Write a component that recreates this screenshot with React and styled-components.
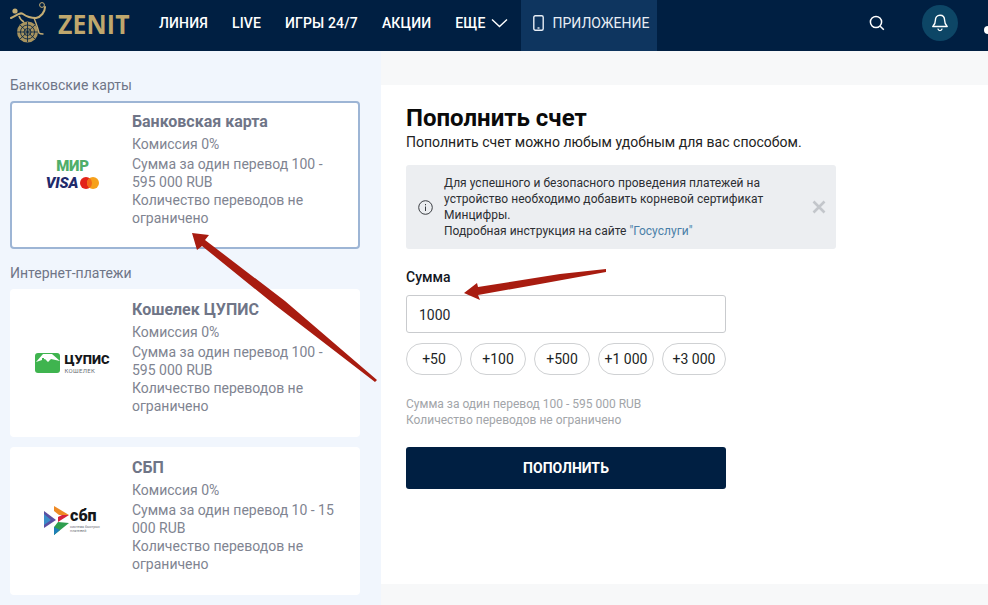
import React from "react";
import styled, { createGlobalStyle } from "styled-components";

const Global = createGlobalStyle`
  html, body { margin: 0; padding: 0; background: #f7f8f9; }
  body { font-family: Roboto, "Liberation Sans", sans-serif; overflow: hidden; }
  * { box-sizing: border-box; }
`;

const Page = styled.div`
  position: relative;
  width: 988px;
  height: 605px;
  overflow: hidden;
  display: flex;
  flex-direction: column;
`;
const Header = styled.header`
  height: 51px;
  flex: none;
  background: #001f42;
  display: flex;
  align-items: stretch;
  padding-left: 10px;
  position: relative;
`;
const Brand = styled.div`
  width: 149px;
  flex: none;
  display: flex;
  align-items: center;
  gap: 8px;
  padding-bottom: 5px;
`;
const BrandName = styled.span`
  font-family: "Open Sans", "Liberation Sans", sans-serif;
  font-size: 27.5px;
  font-weight: 700;
  letter-spacing: 0.2px;
  color: #bfa76d;
  transform: scaleX(0.9);
  transform-origin: left center;
`;
const Nav = styled.nav`
  display: flex;
  align-items: stretch;
  gap: 24px;
`;
const NavItem = styled.div`
  display: flex;
  align-items: center;
  gap: 6px;
  padding-bottom: 5px;
  color: #fff;
  font-size: 14px;
  font-weight: 500;
  letter-spacing: 0.15px;
  white-space: nowrap;
`;
const AppTile = styled.div`
  margin-left: -11px;
  width: 136px;
  padding: 0 0 5px 12px;
  background: #0e355f;
  color: #e8eef5;
  display: flex;
  align-items: center;
  gap: 8px;
  font-size: 14px;
  font-weight: 400;
`;
const HeaderTools = styled.div`
  margin-left: 212px;
  padding-bottom: 5px;
  display: flex;
  align-items: center;
  gap: 37px;
`;
const BellCircle = styled.div`
  width: 36px;
  height: 36px;
  border-radius: 50%;
  background: #0d4666;
  display: flex;
  align-items: center;
  justify-content: center;
`;
const UserDot = styled.div`
  position: absolute;
  right: -4px;
  top: 26px;
  width: 8px;
  height: 8px;
  border-radius: 50%;
  background: #fff;
`;
const Body = styled.div`
  flex: 1;
  display: flex;
  min-height: 0;
`;
const Sidebar = styled.aside`
  width: 381px;
  flex: none;
  background: #f1f6fd;
  padding: 26px 20px 0 10px;
`;
const GroupLabel = styled.div`
  font-size: 14px;
  line-height: 16px;
  color: #6f7587;
  margin-bottom: 8px;
  margin-top: ${(p) => p.$mt || 0}px;
`;
const Card = styled.div`
  width: 350px;
  height: 148px;
  background: #fff;
  border-radius: 4px;
  border: 2px solid ${(p) => (p.$active ? "#9db5d5" : "transparent")};
  display: flex;
  align-items: flex-start;
  margin-bottom: 10px;
`;
const LogoSlot = styled.div`
  width: 120px;
  height: 100%;
  flex: none;
  display: flex;
  align-items: center;
  justify-content: center;
`;
const CardText = styled.div`
  width: 212px;
  padding-top: 9px;
`;
const CardTitle = styled.div`
  font-size: 16px;
  line-height: 20px;
  font-weight: 700;
  color: #6f7587;
  margin-bottom: 3px;
`;
const CardLine = styled.div`
  font-size: 14px;
  line-height: 18px;
  color: #808491;
  margin-top: ${(p) => p.$mt || 0}px;
`;
const Main = styled.main`
  flex: 1;
  padding-top: 34px;
  background: #f7f8f9;
`;
const Panel = styled.section`
  background: #fff;
  height: 499px;
  padding: 19px 25px 0;
`;
const Title = styled.h1`
  margin: 0;
  font-size: 24px;
  line-height: 28px;
  font-weight: 700;
  color: #0a0a0a;
`;
const Subtitle = styled.p`
  margin: 1px 0 0;
  font-size: 14px;
  line-height: 18px;
  letter-spacing: 0.02px;
  color: #222;
`;
const Notice = styled.div`
  margin-top: 14px;
  width: 430px;
  height: 84px;
  background: #eceef1;
  border-radius: 3px;
  display: flex;
  align-items: center;
  padding-left: 12px;
`;
const NoticeText = styled.div`
  margin-left: 11px;
  width: 362px;
  font-size: 12px;
  line-height: 16px;
  letter-spacing: 0.03px;
  color: #2c2f33;
`;
const NoticeLink = styled.span`
  color: #4a7fa8;
`;
const CloseBtn = styled.div`
  margin-left: 6px;
  display: flex;
`;
const FieldLabel = styled.div`
  margin-top: 20px;
  font-size: 14px;
  line-height: 16px;
  font-weight: 500;
  color: #14181f;
`;
const AmountBox = styled.div`
  margin-top: 10px;
  width: 320px;
  height: 38px;
  border: 1px solid #c9cbce;
  border-radius: 3px;
  display: flex;
  align-items: center;
  padding: 1px 0 0 12px;
  font-size: 14px;
  color: #24282e;
`;
const Chips = styled.div`
  margin-top: 10px;
  width: 320px;
  display: flex;
  gap: 8px;
`;
const Chip = styled.div`
  width: ${(p) => p.$w || 56}px;
  height: 32px;
  border: 1px solid #cfd1d3;
  border-radius: 16px;
  display: flex;
  align-items: center;
  justify-content: center;
  font-size: 14px;
  color: #1c1f24;
  white-space: nowrap;
`;
const Hint = styled.div`
  margin-top: 21px;
  font-size: 12px;
  line-height: 16px;
  color: #a2a5a9;
`;
const Submit = styled.div`
  margin-top: 19px;
  width: 320px;
  height: 42px;
  background: #001f42;
  border-radius: 3px;
  color: #fff;
  font-size: 14px;
  font-weight: 700;
  display: flex;
  align-items: center;
  justify-content: center;
`;
const ArrowLayer = styled.svg`
  position: absolute;
  left: 0;
  top: 0;
  pointer-events: none;
`;

const MirVisaRow = styled.div`
  display: flex;
  flex-direction: column;
  align-items: center;
  margin-left: 1px;
`;
const Mir = styled.span`
  font-size: 15px;
  line-height: 13px;
  font-weight: 900;
  color: #4fae6a;
  letter-spacing: -0.2px;
`;
const VisaRow = styled.div`
  display: flex;
  align-items: center;
  gap: 2px;
  margin-top: 3px;
`;
const Visa = styled.span`
  font-size: 15px;
  line-height: 15px;
  font-weight: 900;
  font-style: italic;
  color: #1f2a6b;
  letter-spacing: -0.1px;
`;
const LogoRow = styled.div`
  display: flex;
  align-items: center;
  gap: ${(p) => p.$gap || 0}px;
`;
const LogoWords = styled.div`
  display: flex;
  flex-direction: column;
  gap: ${(p) => p.$gap || 0}px;
`;
const LogoBig = styled.span`
  font-size: ${(p) => p.$size || 13}px;
  line-height: ${(p) => p.$line || 13}px;
  font-weight: 900;
  color: #15171a;
`;
const LogoSmall = styled.span`
  font-size: ${(p) => p.$size || 6}px;
  line-height: ${(p) => p.$line || 7}px;
  letter-spacing: ${(p) => p.$track || 0}px;
  color: #6b7078;
  white-space: pre-line;
`;

const ZenitMark = () => (
  <svg width="40" height="44" viewBox="0 0 40 44" fill="none">
    <circle cx="17.5" cy="31" r="10.5" fill="#a8945f" />
    <g stroke="#001f42" strokeWidth="0.8">
      <circle cx="17.5" cy="31" r="7" />
      <circle cx="17.5" cy="31" r="3.5" />
      <path d="M7 31h21M17.5 21v20M10 24l15 14M25 24 10 38" />
    </g>
    <circle cx="5" cy="10" r="2.6" fill="#c4ad74" />
    <path d="M1 17c6-3 9-6 12-4 4 3 9 4 13 4 5-1 9-6 9-11" stroke="#c4ad74" strokeWidth="2" strokeLinecap="round" />
    <path d="M24 17c2 5 4 10 5 15 1 1 3 1 4 1" stroke="#c4ad74" strokeWidth="1.4" strokeLinecap="round" />
    <circle cx="32" cy="4" r="2.4" stroke="#c4ad74" strokeWidth="1" />
    <path d="M9 15c1 3 3 5 5 6" stroke="#c4ad74" strokeWidth="1.6" />
  </svg>
);

const MastercardMark = () => (
  <svg width="19" height="12" viewBox="0 0 19 12">
    <circle cx="6" cy="6" r="6" fill="#e2231a" />
    <circle cx="13" cy="6" r="6" fill="#f6a11b" />
    <path d="M9.5 1.1a6 6 0 0 1 0 9.8 6 6 0 0 1 0-9.8z" fill="#f26a1b" />
  </svg>
);

const WalletMark = () => (
  <svg width="30" height="20" viewBox="0 0 30 20">
    <path d="M3 0h19a3 3 0 0 1 3 3v14a3 3 0 0 1-3 3H3a3 3 0 0 1-3-3V3a3 3 0 0 1 3-3z" fill="#3fb44f" />
    <path d="M1 9 8 1h9l8 7-9-2-3 3-3-3z" fill="#fff" />
    <path d="M7 5h2v2H7z" fill="#3fb44f" />
  </svg>
);

const SbpMark = () => (
  <svg width="26" height="30" viewBox="0 0 26 30">
    <path d="M10 0 25 9H15l-5-4z" fill="#ee8a25" />
    <path d="M25 9 14 16v-5l4-2z" fill="#d5213e" />
    <path d="M0 5 12 14 0 22z" fill="#5b4fa2" />
    <path d="M0 8 7 14 0 19z" fill="#3c8ec9" />
    <path d="M10 29 25 17 14 16l-4 5z" fill="#2f9e4f" />
    <path d="M10 21v8l6-5z" fill="#1f7fb8" />
  </svg>
);

const PhoneIcon = () => (
  <svg width="11" height="16" viewBox="0 0 11 16" fill="none" stroke="#e8eef5" strokeWidth="1.4">
    <rect x="0.8" y="0.8" width="9.4" height="14.4" rx="1.5" />
    <path d="M4.5 13h2" />
  </svg>
);

const cards = {
  bank: { title: "Банковская карта", sum: ["Сумма за один перевод 100 -", "595 000 RUB"] },
  cupis: { title: "Кошелек ЦУПИС", sum: ["Сумма за один перевод 100 -", "595 000 RUB"] },
  sbp: { title: "СБП", sum: ["Сумма за один перевод 10 - 15", "000 RUB"] },
};

const PayCard = ({ data, active, logo }) => (
  <Card $active={active}>
    <LogoSlot>{logo}</LogoSlot>
    <CardText>
      <CardTitle>{data.title}</CardTitle>
      <CardLine>Комиссия 0%</CardLine>
      <CardLine $mt={2}>{data.sum[0]}</CardLine>
      <CardLine>{data.sum[1]}</CardLine>
      <CardLine>Количество переводов не</CardLine>
      <CardLine>ограничено</CardLine>
    </CardText>
  </Card>
);

export default function App() {
  return (
    <Page>
      <Global />
      <Header>
        <Brand>
          <ZenitMark />
          <BrandName>ZENIT</BrandName>
        </Brand>
        <Nav>
          <NavItem>ЛИНИЯ</NavItem>
          <NavItem>LIVE</NavItem>
          <NavItem>ИГРЫ 24/7</NavItem>
          <NavItem>АКЦИИ</NavItem>
          <NavItem>
            ЕЩЕ
            <svg width="17" height="10" viewBox="0 0 17 10" fill="none" stroke="#fff" strokeWidth="1.4">
              <path d="M1 1.5 8.5 8.5 16 1.5" />
            </svg>
          </NavItem>
          <AppTile>
            <PhoneIcon />
            ПРИЛОЖЕНИЕ
          </AppTile>
        </Nav>
        <HeaderTools>
          <svg width="16" height="16" viewBox="0 0 16 16" fill="none" stroke="#fff" strokeWidth="1.5">
            <circle cx="7" cy="7" r="5.6" />
            <path d="m11.2 11.2 3.6 3.6" />
          </svg>
          <BellCircle>
            <svg width="16" height="18" viewBox="0 0 16 18" fill="none" stroke="#fff" strokeWidth="1.4" strokeLinejoin="round">
              <path d="M8 1.2c-3 0-4.6 2.3-4.6 5 0 3.4-1.2 5-2.6 6.3h14.4c-1.4-1.3-2.6-2.9-2.6-6.3 0-2.7-1.6-5-4.6-5z" />
              <path d="M5.8 14.6c.4 1.3 1.2 2 2.2 2s1.8-.7 2.2-2" />
            </svg>
          </BellCircle>
        </HeaderTools>
        <UserDot />
      </Header>
      <Body>
        <Sidebar>
          <GroupLabel>Банковские карты</GroupLabel>
          <PayCard
            data={cards.bank}
            active
            logo={
              <MirVisaRow>
                <Mir>МИР</Mir>
                <VisaRow>
                  <Visa>VISA</Visa>
                  <MastercardMark />
                </VisaRow>
              </MirVisaRow>
            }
          />
          <GroupLabel $mt={16}>Интернет-платежи</GroupLabel>
          <PayCard
            data={cards.cupis}
            logo={
              <LogoRow>
                <WalletMark />
                <LogoWords $gap={1}>
                  <LogoBig>ЦУПИС</LogoBig>
                  <LogoSmall $track={0.3}>КОШЕЛЕК</LogoSmall>
                </LogoWords>
              </LogoRow>
            }
          />
          <PayCard
            data={cards.sbp}
            logo={
              <LogoRow>
                <SbpMark />
                <LogoWords $gap={2}>
                  <LogoBig $size={16} $line={14}>сбп</LogoBig>
                  <LogoSmall $size={3.6} $line={4}>{"система быстрых\nплатежей"}</LogoSmall>
                </LogoWords>
              </LogoRow>
            }
          />
        </Sidebar>
        <Main>
          <Panel>
            <Title>Пополнить счет</Title>
            <Subtitle>Пополнить счет можно любым удобным для вас способом.</Subtitle>
            <Notice>
              <svg width="15" height="15" viewBox="0 0 15 15" fill="none" stroke="#3a3d42" strokeWidth="1">
                <circle cx="7.5" cy="7.5" r="6.8" />
                <path d="M7.5 6.5v4.5M7.5 4v1.3" />
              </svg>
              <NoticeText>
                Для успешного и безопасного проведения платежей на устройство необходимо добавить корневой сертификат Минцифры.
                <br />
                Подробная инструкция на сайте <NoticeLink>"Госуслуги"</NoticeLink>
              </NoticeText>
              <CloseBtn>
                <svg width="14" height="14" viewBox="0 0 14 14" stroke="#c3c6cb" strokeWidth="2.6">
                  <path d="m1.5 1.5 11 11M12.5 1.5l-11 11" />
                </svg>
              </CloseBtn>
            </Notice>
            <FieldLabel>Сумма</FieldLabel>
            <AmountBox>1000</AmountBox>
            <Chips>
              <Chip>+50</Chip>
              <Chip>+100</Chip>
              <Chip>+500</Chip>
              <Chip>+1 000</Chip>
              <Chip $w={64}>+3 000</Chip>
            </Chips>
            <Hint>
              Сумма за один перевод 100 - 595 000 RUB
              <br />
              Количество переводов не ограничено
            </Hint>
            <Submit>ПОПОЛНИТЬ</Submit>
          </Panel>
        </Main>
      </Body>
      <ArrowLayer width="988" height="605" viewBox="0 0 988 605">
        <path d="M192 233 L209 235 L205 240 L285 301 L377 380 L375 382 L275 305 L202 246 L197 250 Z" fill="#a81c10" />
        <path d="M464 293 L477 283 L478 287 L560 274 L606 269 L606 272 L540 284 L478 295 L480 300 Z" fill="#a81c10" />
      </ArrowLayer>
    </Page>
  );
}
